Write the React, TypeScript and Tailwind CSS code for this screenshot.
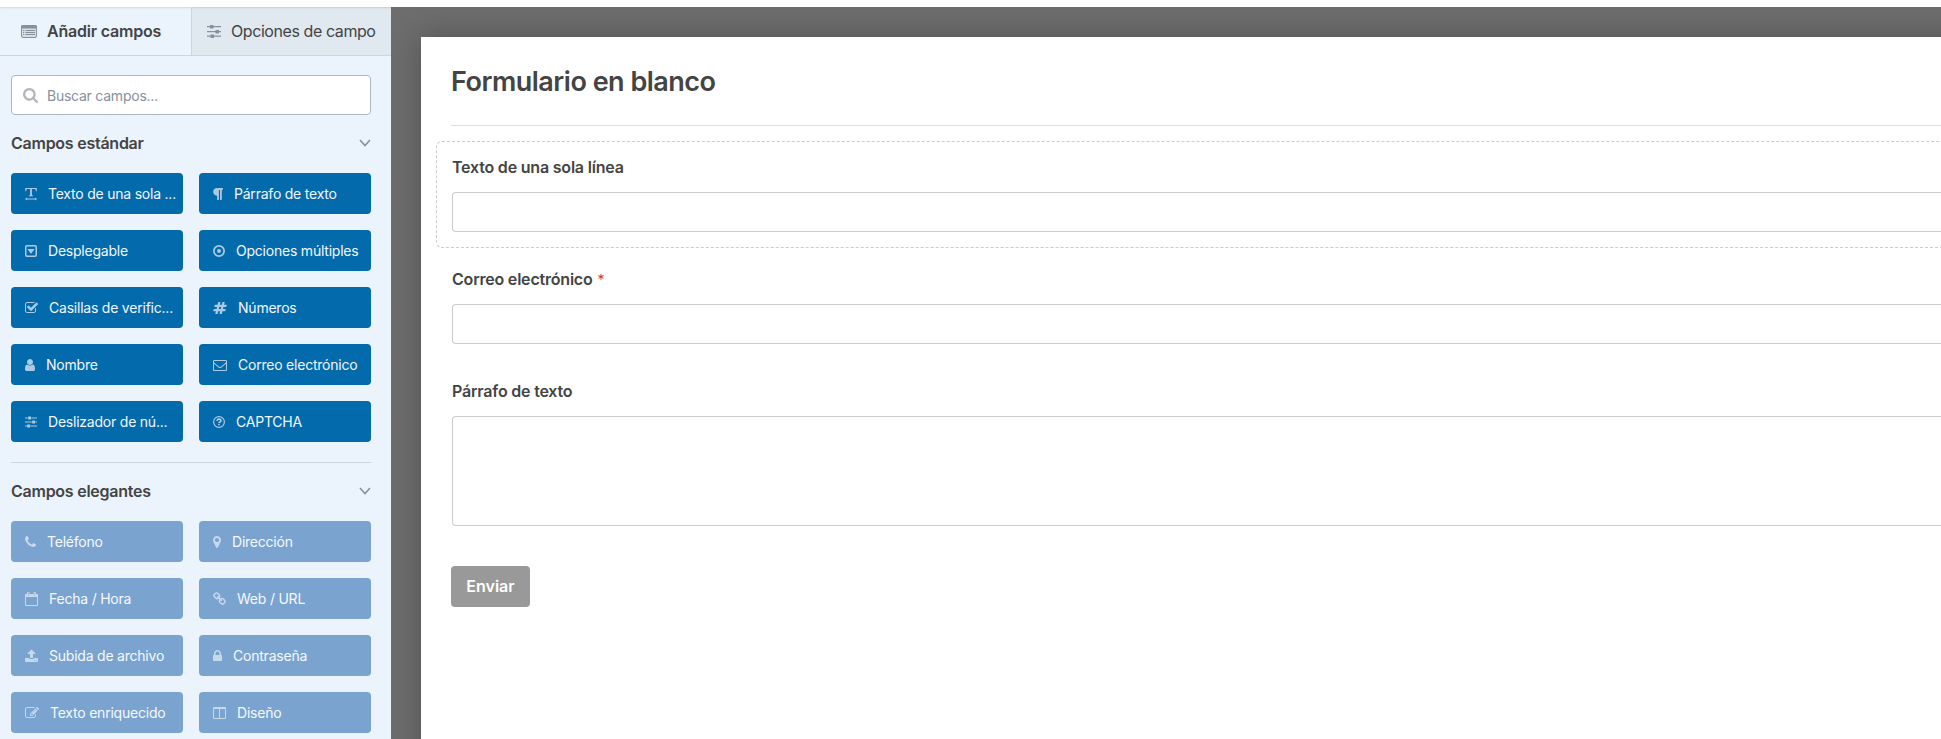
import type { ReactNode } from "react";

type GlyphProps = { x: number; w: number; children: ReactNode };

// Glyphs are drawn on a 1792 unit grid, 128 units per pixel at 14px
function Glyph({ x, w, children }: GlyphProps) {
  return (
    <svg
      viewBox={`${x} 0 ${w} 1792`}
      style={{ width: w / 128 }}
      className="h-3.5 shrink-0"
      fill="currentColor"
      aria-hidden
    >
      {children}
    </svg>
  );
}

const icons: Record<string, ReactNode> = {
  text: (
    <Glyph x={128} w={1536}>
      <path d="M160 128h1472v400h-100q-20-210-130-270h-390v760q0 70 160 76v74H620v-74q160-6 160-76V258H390q-110 60-130 270H160z" />
      <path d="M128 1530l230-190v126h1076v-126l230 190-230 190v-126H358v126z" />
    </Glyph>
  ),
  paragraph: (
    <Glyph x={256} w={1280}>
      <path d="M1534 189v73q0 29-18.5 61t-42.5 32q-50 0-54 1-26 6-32 31-3 11-3 64v1152q0 25-18 43t-43 18h-108q-25 0-43-18t-18-43v-1218h-143v1218q0 25-17.5 43t-43.5 18h-108q-26 0-43.5-18t-17.5-43v-496q-147-12-245-59-126-58-192-179-64-117-64-259 0-166 88-286 88-118 209-159 111-37 417-37h479q25 0 43 18t18 43z" />
    </Glyph>
  ),
  dropdown: (
    <Glyph x={128} w={1536}>
      <rect x="224" y="224" width="1344" height="1344" rx="150" fill="none" stroke="currentColor" strokeWidth="192" />
      <path d="M512 640h768q50 0 30 70l-350 480q-64 70-128 0L482 710q-20-70 30-70z" />
    </Glyph>
  ),
  radio: (
    <Glyph x={128} w={1536}>
      <circle cx="896" cy="896" r="656" fill="none" stroke="currentColor" strokeWidth="224" />
      <circle cx="896" cy="896" r="256" />
    </Glyph>
  ),
  check: (
    <Glyph x={64} w={1664}>
      <path d="M1472 930v318q0 119-84.5 203.5t-203.5 84.5h-832q-119 0-203.5-84.5t-84.5-203.5v-832q0-119 84.5-203.5t203.5-84.5h832q63 0 117 25 15 7 18 23 3 17-9 29l-49 49q-10 10-23 10-3 0-9-2-23-6-45-6h-832q-66 0-113 47t-47 113v832q0 66 47 113t113 47h832q66 0 113-47t47-113v-254q0-13 9-22l64-64q10-10 23-10 6 0 12 3 20 8 20 29zm231-489l-814 814q-24 24-57 24t-57-24l-430-430q-24-24-24-57t24-57l110-110q24-24 57-24t57 24l263 263 647-647q24-24 57-24t57 24l110 110q24 24 24 57t-24 57z" />
    </Glyph>
  ),
  hash: (
    <Glyph x={0} w={1792}>
      <path d="M991 1024l64-256h-254l-64 256h254zm768-504l-56 224q-7 24-31 24h-327l-64 256h311q15 0 25 12 10 14 6 28l-56 224q-5 24-31 24h-327l-81 328q-7 24-31 24h-224q-16 0-26-12-9-12-6-28l78-312h-254l-81 328q-7 24-31 24h-225q-15 0-25-12-9-12-6-28l78-312h-311q-15 0-25-12-9-12-6-28l56-224q7-24 31-24h327l64-256h-311q-15 0-25-12-10-14-6-28l56-224q5-24 31-24h327l81-328q7-24 32-24h224q15 0 25 12 9 12 6 28l-78 312h254l81-328q7-24 32-24h224q15 0 25 12 9 12 6 28l-78 312h311q15 0 25 12 9 12 6 28z" />
    </Glyph>
  ),
  user: (
    <Glyph x={256} w={1280}>
      <path d="M1536 1399q0 109-62.5 187t-150.5 78h-854q-88 0-150.5-78t-62.5-187q0-85 8.5-160.5t31.5-152 58.5-131 94-89 134.5-34.5q131 128 313 128t313-128q76 0 134.5 34.5t94 89 58.5 131 31.5 152 8.5 160.5zm-256-887q0 159-112.5 271.5t-271.5 112.5-271.5-112.5-112.5-271.5 112.5-271.5 271.5-112.5 271.5 112.5 112.5 271.5z" />
    </Glyph>
  ),
  envelope: (
    <Glyph x={0} w={1792}>
      <path d="M1664 1504v-768q-32 36-69 66-268 206-426 338-51 43-83 67t-86.5 48.5-102.5 24.5h-2q-48 0-102.5-24.5t-86.5-48.5-83-67q-158-132-426-338-37-30-69-66v768q0 13 9.5 22.5t22.5 9.5h1472q13 0 22.5-9.5t9.5-22.5zm0-1051v-24.5l-.5-13-3-12.5-5.5-9-9-7.5-14-2.5h-1472q-13 0-22.5 9.5t-9.5 22.5q0 168 147 284 193 152 401 317 6 5 35 29.5t46 37.5 44.5 31.5 50.5 27.5 43 9h2q20 0 43-9t50.5-27.5 44.5-31.5 46-37.5 35-29.5q208-165 401-317 54-43 100.5-115.5t46.5-131.5zm128-37v1088q0 66-47 113t-113 47h-1472q-66 0-113-47t-47-113v-1088q0-66 47-113t113-47h1472q66 0 113 47t47 113z" />
    </Glyph>
  ),
  sliders: (
    <Glyph x={128} w={1536}>
      <path d="M128 320h352v128H128zM960 320h704v128H960zM128 832h864v128H128zM1472 832h192v128h-192zM128 1344h224v128H128zM832 1344h832v128H832z" />
      <rect x="528" y="192" width="384" height="384" rx="64" />
      <rect x="1040" y="704" width="384" height="384" rx="64" />
      <rect x="400" y="1216" width="384" height="384" rx="64" />
    </Glyph>
  ),
  question: (
    <Glyph x={128} w={1536}>
      <circle cx="896" cy="896" r="690" fill="none" stroke="currentColor" strokeWidth="150" />
      <path d="M640 740q30-210 256-210 240 0 240 195 0 105-120 170-120 65-120 135" fill="none" stroke="currentColor" strokeWidth="210" />
      <rect x="790" y="1130" width="212" height="190" rx="30" />
    </Glyph>
  ),
  phone: (
    <Glyph x={192} w={1408}>
      <path d="M1600 1240q0 27-10 70.5t-21 68.5q-21 50-122 106-94 51-186 51-27 0-53-3.5t-57.5-12.5-47-14.5-55.5-20.5-49-18q-98-35-175-83-127-79-264-216t-216-264q-48-77-83-175-3-9-18-49t-20.5-55.5-14.5-47-12.5-57.5-3.5-53q0-92 51-186 56-101 106-122 25-11 68.5-21t70.5-10q14 0 21 3 18 6 53 76 11 19 30 54t35 63.5 31 53.5q3 4 17.5 25t21.5 35.5 7 28.5q0 20-28.5 50t-62 55-62 53-28.5 46q0 9 5 22.5t8.5 20.5 14 24 11.5 19q76 137 174 235t235 174q2 1 19 11.5t24 14 20.5 8.5 22.5 5q18 0 46-28.5t53-62 55-62 50-28.5q14 0 28.5 7t35.5 21.5 25 17.5q25 15 53.5 31t63.5 35 54 30q70 35 76 53 3 7 3 21z" />
    </Glyph>
  ),
  marker: (
    <Glyph x={384} w={1024}>
      <path d="M1152 640q0-106-75-181t-181-75-181 75-75 181 75 181 181 75 181-75 75-181zm256 0q0 109-33 179l-364 774q-16 33-47.5 52t-67.5 19-67.5-19-46.5-52l-365-774q-33-70-33-179 0-212 150-362t362-150 362 150 150 362z" />
    </Glyph>
  ),
  calendar: (
    <Glyph x={64} w={1664}>
      <path fillRule="evenodd" d="M192 640v960q0 64 32 64h1344q32 0 32-64V640zM64 384q0-128 128-128h128v-96q0-160 160-160t160 160v96h512v-96q0-160 160-160t160 160v96h128q128 0 128 128v1280q0 128-128 128H192q-128 0-128-128zM448 130v350h64V130zM1280 130v350h64V130z" />
    </Glyph>
  ),
  link: (
    <Glyph x={64} w={1664}>
      <path d="M1520 1216q0-40-28-68l-208-208q-28-28-68-28-42 0-72 32 3 3 19 18.5t21.5 21.5 15 19 13 25.5 3.5 27.5q0 40-28 68t-68 28q-15 0-27.5-3.5t-25.5-13-19-15-21.5-21.5-18.5-19q-33 31-33 73 0 40 28 68l206 207q27 27 68 27 40 0 68-26l147-146q28-28 28-67zm-703-705q0-40-28-68l-206-207q-28-28-68-28-39 0-68 27l-147 146q-28 28-28 67 0 40 28 68l208 208q27 27 68 27 42 0 72-31-3-3-19-18.5t-21.5-21.5-15-19-13-25.5-3.5-27.5q0-40 28-68t68-28q15 0 27.5 3.5t25.5 13 19 15 21.5 21.5 18.5 19q33-31 33-73zm895 705q0 120-85 203l-147 146q-83 83-203 83-121 0-204-85l-206-207q-83-83-83-203 0-123 88-209l-88-88q-86 88-208 88-120 0-204-84l-208-208q-84-84-84-204t85-203l147-146q83-83 203-83 121 0 204 85l206 207q83 83 83 203 0 123-88 209l88 88q86-88 208-88 120 0 204 84l208 208q84 84 84 204z" />
    </Glyph>
  ),
  upload: (
    <Glyph x={64} w={1664}>
      <path d="M1344 1472q0-26-19-45t-45-19-45 19-19 45 19 45 45 19 45-19 19-45zm256 0q0-26-19-45t-45-19-45 19-19 45 19 45 45 19 45-19 19-45zm128-224v320q0 40-28 68t-68 28h-1472q-40 0-68-28t-28-68v-320q0-40 28-68t68-28h427q21 56 70.5 92t110.5 36h256q61 0 110.5-36t70.5-92h427q40 0 68 28t28 68zm-325-648q-17 40-59 40h-256v448q0 26-19 45t-45 19h-256q-26 0-45-19t-19-45v-448h-256q-42 0-59-40-17-39 14-69l448-448q18-19 45-19t45 19l448 448q31 30 14 69z" />
    </Glyph>
  ),
  lock: (
    <Glyph x={320} w={1152}>
      <path d="M640 768h512v-192q0-106-75-181t-181-75-181 75-75 181v192zm832 96v576q0 40-28 68t-68 28h-960q-40 0-68-28t-28-68v-576q0-40 28-68t68-28h32v-192q0-184 132-316t316-132 316 132 132 316v192h32q40 0 68 28t28 68z" />
    </Glyph>
  ),
  edit: (
    <Glyph x={0} w={1792}>
      <path d="M888 1184l116-116-152-152-116 116v56h96v96h56zm440-720q-16-16-33 1l-350 350q-17 17-1 33t33-1l350-350q17-17 1-33zm80 594v190q0 119-84.5 203.5t-203.5 84.5h-832q-119 0-203.5-84.5t-84.5-203.5v-832q0-119 84.5-203.5t203.5-84.5h832q63 0 117 25 15 7 18 23 3 17-9 29l-49 49q-14 14-32 8-23-6-45-6h-832q-66 0-113 47t-47 113v832q0 66 47 113t113 47h832q66 0 113-47t47-113v-126q0-13 9-22l64-64q15-15 35-7t20 29zm-96-738l288 288-672 672h-288v-288zm444 132l-92 92-288-288 92-92q28-28 68-28t68 28l152 152q28 28 28 68t-28 68z" />
    </Glyph>
  ),
  columns: (
    <Glyph x={64} w={1664}>
      <path fillRule="evenodd" d="M224 128h1344q160 0 160 160v1216q0 160-160 160H224q-160 0-160-160V288q0-160 160-160zM192 384v1120q0 32 32 32h608V384zM960 384v1152h608q32 0 32-32V384z" />
    </Glyph>
  ),
};

const standardFields = [
  { icon: "text", label: "Texto de una sola ..." },
  { icon: "paragraph", label: "Párrafo de texto" },
  { icon: "dropdown", label: "Desplegable" },
  { icon: "radio", label: "Opciones múltiples" },
  { icon: "check", label: "Casillas de verific..." },
  { icon: "hash", label: "Números" },
  { icon: "user", label: "Nombre" },
  { icon: "envelope", label: "Correo electrónico" },
  { icon: "sliders", label: "Deslizador de nú..." },
  { icon: "question", label: "CAPTCHA" },
];

const fancyFields = [
  { icon: "phone", label: "Teléfono" },
  { icon: "marker", label: "Dirección" },
  { icon: "calendar", label: "Fecha / Hora" },
  { icon: "link", label: "Web / URL" },
  { icon: "upload", label: "Subida de archivo" },
  { icon: "lock", label: "Contraseña" },
  { icon: "edit", label: "Texto enriquecido" },
  { icon: "columns", label: "Diseño" },
];

type FieldGroupProps = {
  title: string;
  fields: { icon: string; label: string }[];
  disabled?: boolean;
};

function FieldGroup({ title, fields, disabled }: FieldGroupProps) {
  return (
    <section>
      <div className="flex h-[58px] items-center justify-between pb-[3px]">
        <h3 className="text-base font-semibold tracking-[-0.25px]">{title}</h3>
        <svg viewBox="0 0 12 8" className="h-2 w-3 text-[#86919e]" fill="none" stroke="currentColor" strokeWidth="1.6" aria-hidden>
          <path d="M1 1l5 5.5L11 1" />
        </svg>
      </div>
      <div className="grid grid-cols-2 gap-4">
        {fields.map((f) => (
          <button
            key={f.label}
            className={`flex h-[41px] items-center gap-[11px] rounded-[4px] pl-3.5 text-sm tracking-[-0.22px] whitespace-nowrap ${
              disabled ? "bg-[#7aa3cf] text-[#f5f9fd]" : "bg-[#036aab] text-[#f2f7fb]"
            }`}
          >
            <span className={disabled ? "text-[#c5d8ec]" : "text-[#adcae4]"}>{icons[f.icon]}</span>
            {f.label}
          </button>
        ))}
      </div>
    </section>
  );
}

function Sidebar() {
  return (
    <aside className="w-[391px] shrink-0 bg-[#ebf3fc]">
      <div className="flex h-[49px] border-b border-[#ccd5e0] text-base">
        <div className="flex w-[192px] items-center border-r border-[#ccd5e0] pl-[21px] font-semibold tracking-[-0.2px] shadow-[inset_0_2px_2px_-1px_rgba(0,0,0,0.12)]">
          <svg viewBox="0 0 16 13" className="mr-[10px] h-[13px] w-4 text-[#86919e]" aria-hidden>
            <rect x="0.5" y="0.5" width="15" height="12" rx="1.5" fill="#d5dde6" stroke="currentColor" />
            <path d="M0 1.5Q0 0 1.5 0h13Q16 0 16 1.5V3.5H0zM2 5h1.2v1H2zM2 7h1.2v1H2zM2 9h1.2v1H2zM4.5 5H14v1H4.5zM4.5 7H14v1H4.5zM4.5 9H14v1H4.5z" fill="currentColor" />
          </svg>
          Añadir campos
        </div>
        <div className="flex flex-1 items-center bg-[#e0e8f0] pl-[15px] tracking-[-0.42px] shadow-[inset_0_2px_2px_-1px_rgba(0,0,0,0.12)]">
          <svg viewBox="0 0 14 13" className="mr-[10px] h-[13px] w-3.5 text-[#86919e]" fill="currentColor" aria-hidden>
            <path d="M0 1h14v1.300H0zM0 6h14v1.300H0zM0 10.500h14v1.300H0zM3 0h3.500v3.500H3zM8.500 5H12v3.500H8.500zM3.500 9.500H7v3.500H3.500z" />
          </svg>
          Opciones de campo
        </div>
      </div>

      <div className="pt-[19px] pr-5 pl-[11px]">
        <div className="flex h-10 items-center rounded-[4px] border border-[#b0b6bd] bg-white pl-[11px]">
          <svg viewBox="64 128 1664 1664" className="mr-[9px] size-[15px] text-[#b0b6bd]" fill="currentColor" aria-hidden>
            <path d="M1216 832q0-185-131.5-316.5t-316.5-131.5-316.5 131.5-131.5 316.5 131.5 316.5 316.5 131.5 316.5-131.5 131.5-316.5zm512 832q0 52-38 90t-90 38q-54 0-90-38l-343-342q-179 124-399 124-143 0-273.5-55.5t-225-150-150-225-55.5-273.5 55.5-273.5 150-225 225-150 273.5-55.5 273.5 55.5 225 150 150 225 55.5 273.5q0 220-124 399l343 343q37 37 37 90z" />
          </svg>
          <span className="pt-0.5 text-sm tracking-[-0.24px] text-[#86919e]">Buscar campos...</span>
        </div>
        <FieldGroup title="Campos estándar" fields={standardFields} />
        <div className="mt-5 border-t border-[#ccd5e0]">
          <FieldGroup title="Campos elegantes" fields={fancyFields} disabled />
        </div>
      </div>
    </aside>
  );
}

function Preview() {
  return (
    <main className="flex-1 overflow-hidden bg-[#6d6d6d] pt-[30px] pl-[30px]">
      <div className="-mr-10 h-[760px] bg-white pl-[15px] shadow-[0_0_30px_rgba(0,0,0,0.25)]">
        <div className="ml-[15px] flex h-[89px] items-center border-b border-[#ddd] pt-0.5">
          <h1 className="text-[27px] font-semibold tracking-[-0.5px]">Formulario en blanco</h1>
        </div>
        <div className="mt-[15px] h-[107px] rounded-l-[6px] border border-r-0 border-dashed border-[#ccc] pt-[13px] pl-[15px]">
          <label className="block text-base leading-6 font-semibold tracking-[-0.2px]">Texto de una sola línea</label>
          <div className="mt-[13px] h-10 rounded-l-[4px] border border-r-0 border-[#ccc]" />
        </div>
        <div className="pt-[19px] pl-4">
          <label className="block text-base leading-6 font-semibold tracking-[-0.2px]">
            Correo electrónico <span className="ml-px text-sm font-normal text-[#d63638]">*</span>
          </label>
          <div className="mt-[13px] h-10 rounded-l-[4px] border border-r-0 border-[#ccc]" />
        </div>
        <div className="pt-[35px] pl-4">
          <label className="block text-base leading-6 font-semibold tracking-[-0.2px]">Párrafo de texto</label>
          <div className="mt-[13px] h-[110px] rounded-l-[4px] border border-r-0 border-[#ccc]" />
        </div>
        <button className="mt-10 ml-[15px] h-[41px] w-[79px] rounded-[4px] bg-[#999] pb-px text-base font-semibold text-white">
          Enviar
        </button>
      </div>
    </main>
  );
}

export default function App() {
  return (
    <div className="flex h-[739px] w-[1941px] flex-col overflow-hidden bg-white font-['Inter',sans-serif] text-[#444]">
      <header className="h-[7px] shrink-0" />
      <div className="flex min-h-0 flex-1">
        <Sidebar />
        <Preview />
      </div>
    </div>
  );
}
